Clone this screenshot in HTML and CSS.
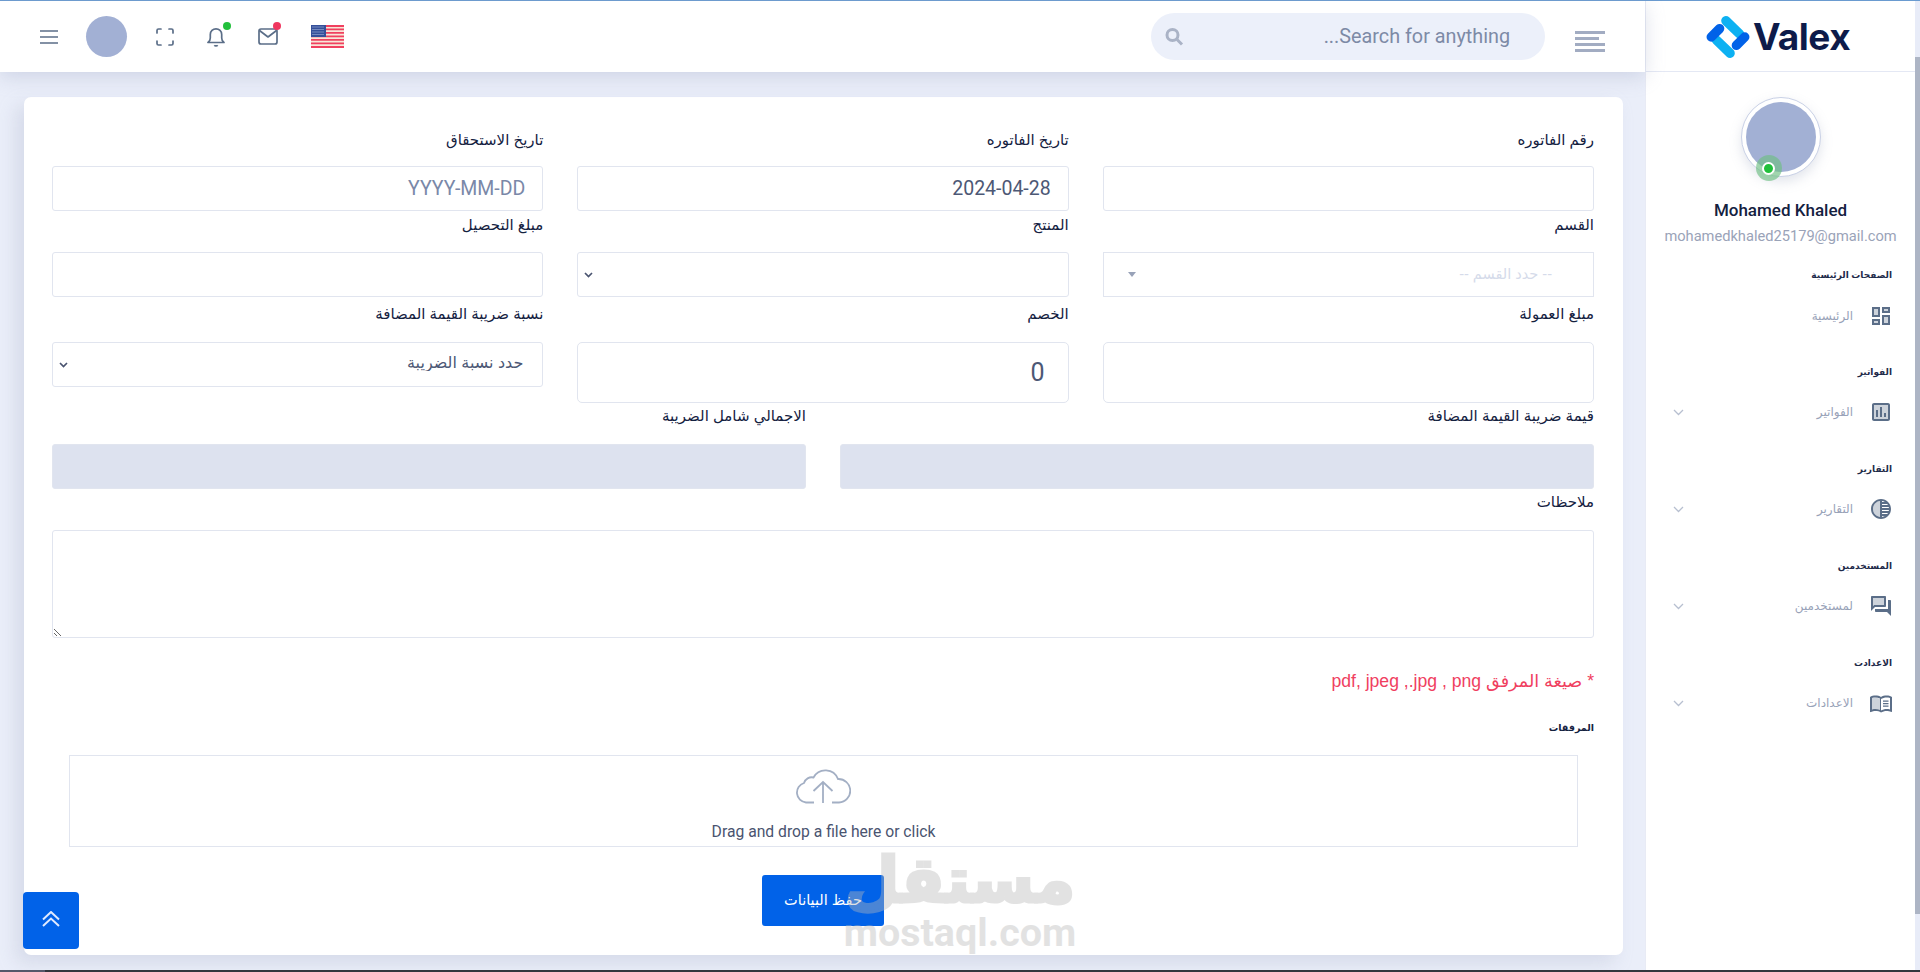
FILE: index.html
```html
<!DOCTYPE html>
<html lang="ar">
<head>
<meta charset="utf-8">
<title>Valex</title>
<link rel="stylesheet" href="styles.css">
</head>
<body>
<div class="topline"></div>
<div class="shell">
  <div class="main">
    <header class="header">
      <div class="header-left">
        <svg class="ic-menu" width="18" height="14" viewBox="0 0 18 14"><path d="M0 1h18M0 7h18M0 13h18"/></svg>
        <span class="head-avatar"></span>
        <svg class="ic-full" width="18" height="18" viewBox="0 0 18 18"><path d="M1 5V2.500A1.500 1.500 0 0 1 2.500 1H5M13 1h2.500A1.500 1.500 0 0 1 17 2.500V5M17 13v2.500a1.500 1.500 0 0 1-1.500 1.500H13M5 17H2.500A1.500 1.500 0 0 1 1 15.500V13"/></svg>
        <span class="ic-wrap ic-bell-wrap">
          <svg class="ic-line" width="18" height="20" viewBox="0 0 18 20"><path d="M1 15.500h16c-1.500-1-2.300-2-2.300-4.500V7.500a5.700 5.700 0 0 0-11.400 0V11c0 2.500-.8 3.500-2.300 4.500zM7.300 18.200c.8 1 2.600 1 3.400 0"/></svg>
          <i class="dot dot-green"></i>
        </span>
        <span class="ic-wrap ic-mail-wrap">
          <svg class="ic-line" width="20" height="17" viewBox="0 0 20 17"><rect x="1" y="1" width="18" height="15" rx="2"/><path d="M1.500 2.500 10 9l8.500-6.500"/></svg>
          <i class="dot dot-red"></i>
        </span>
        <svg class="flag" width="33" height="23" viewBox="0 0 33 23">
          <rect width="33" height="23" fill="#f8e6d8"/>
          <path d="M0 0h33v2H0zM0 3.500h33v1.800H0zM0 7h33v1.800H0zM0 10.500h33v1.800H0zM0 14h33v1.800H0zM0 17.500h33v1.800H0zM0 21h33v2H0z" fill="#f0405f"/>
          <rect width="15" height="12" fill="#35509a"/>
          <path d="M1.500 2h12M1.500 4.500h12M1.500 7h12M1.500 9.500h12" stroke="#b8c4e4" stroke-width="1" stroke-dasharray="1 1"/>
        </svg>
      </div>
      <div class="header-right">
        <div class="search">
          <svg class="ic-search" width="19" height="18" viewBox="0 0 19 18"><circle cx="7.500" cy="7" r="5.500"/><path d="m12 11.500 5 5"/></svg>
          <span class="search-text" dir="rtl">Search for anything...</span>
        </div>
        <div class="align-ic"><i></i><i class="short"></i><i></i><i></i></div>
      </div>
    </header>

    <div class="content">
      <form class="card" dir="rtl">
        <div class="row row-first">
          <div class="field"><label class="lbl">رقم الفاتوره</label><input class="ctl" type="text"></div>
          <div class="field"><label class="lbl">تاريخ الفاتوره</label><input class="ctl" type="text" value="2024-04-28"></div>
          <div class="field"><label class="lbl">تاريخ الاستحقاق</label><input class="ctl" type="text" placeholder="YYYY-MM-DD"></div>
        </div>
        <div class="row row-tight">
          <div class="field"><label class="lbl">القسم</label>
            <div class="fake-select"><span>-- حدد القسم --</span><i class="caret"></i></div>
          </div>
          <div class="field"><label class="lbl">المنتج</label><select class="ctl sel"><option></option></select></div>
          <div class="field"><label class="lbl">مبلغ التحصيل</label><input class="ctl" type="text"></div>
        </div>
        <div class="row row-mid">
          <div class="field"><label class="lbl">مبلغ العمولة</label><input class="ctl tall" type="text"></div>
          <div class="field"><label class="lbl">الخصم</label><input class="ctl tall big" type="text" value="0"></div>
          <div class="field"><label class="lbl">نسبة ضريبة القيمة المضافة</label><select class="ctl sel sel-tax"><option>حدد نسبة الضريبة</option></select></div>
        </div>
        <div class="row row-two">
          <div class="field"><label class="lbl">قيمة ضريبة القيمة المضافة</label><input class="ctl off" type="text" readonly></div>
          <div class="field"><label class="lbl">الاجمالي شامل الضريبة</label><input class="ctl off" type="text" readonly></div>
        </div>
        <div class="notes">
          <label class="lbl">ملاحظات</label>
          <textarea class="ctl area"></textarea>
        </div>
        <p class="hint">* صيغة المرفق  pdf, jpeg ,.jpg , png</p>
        <p class="attach">المرفقات</p>
        <div class="drop" dir="ltr">
          <svg class="cloud" width="56" height="36" viewBox="0 0 56 36"><path d="M19 34.500H11a10 10 0 0 1-2-19.500 8 8 0 0 1 9.500-5.500A13.500 13.500 0 0 1 43 11a11.700 11.700 0 0 1 1 23.500h-7M28 35V14M18.500 23 28 14l9.500 9"/></svg>
          <span class="drop-text">Drag and drop a file here or click</span>
        </div>
        <div class="actions"><button class="save" type="button">حفظ البيانات</button></div>
      </form>
    </div>
  </div>

  <aside class="side">
    <div class="brand">
      <svg class="brand-mark" width="44" height="44" viewBox="1 1 42 42"><g fill="none" stroke-width="9" stroke-linecap="round"><path d="M20 6.500 33 19M24 37.500 11 25" stroke="#0db1f2"/><path d="M6 22l8-8M38 22l-8 8" stroke="#0162e8"/></g></svg>
      <span class="brand-name">Valex</span>
    </div>
    <div class="profile">
      <div class="pic"><span class="pic-in"></span><i class="halo"><b></b></i></div>
      <div class="pname">Mohamed Khaled</div>
      <div class="pmail">mohamedkhaled25179@gmail.com</div>
    </div>
    <nav class="nav" dir="rtl">
      <section class="sec">
        <h4 class="sec-t">الصفحات الرئيسية</h4>
        <a class="item item-first">
          <svg class="nav-ic" viewBox="0 0 24 24"><path opacity=".3" d="M5 5h4v6H5zm10 8h4v6h-4zM5 17h4v2H5zM15 5h4v2h-4z"/><path d="M3 13h8V3H3v10zm2-8h4v6H5V5zm8 16h8V11h-8v10zm2-8h4v6h-4v-6zM13 3v6h8V3h-8zm6 4h-4V5h4v2zM3 21h8v-6H3v6zm2-4h4v2H5v-2z"/></svg>
          <span>الرئيسية</span>
        </a>
      </section>
      <section class="sec">
        <h4 class="sec-t">الفواتير</h4>
        <a class="item">
          <svg class="nav-ic" viewBox="0 0 24 24"><path opacity=".3" d="M5 5v14h14V5H5zm4 12H7v-7h2v7zm4 0h-2V7h2v10zm4 0h-2v-4h2v4z"/><path d="M3 5v14c0 1.100.9 2 2 2h14c1.100 0 2-.9 2-2V5c0-1.100-.9-2-2-2H5c-1.100 0-2 .9-2 2zm2 0h14v14H5V5zm2 5h2v7H7zm4-3h2v10h-2zm4 6h2v4h-2z"/></svg>
          <span>الفواتير</span>
          <svg class="chev" width="11" height="7" viewBox="0 0 11 7"><path d="m1 1 4.500 4.500L10 1"/></svg>
        </a>
      </section>
      <section class="sec">
        <h4 class="sec-t">التقارير</h4>
        <a class="item">
          <svg class="nav-ic" viewBox="0 0 24 24"><path opacity=".3" d="M4 12c0 4.080 3.060 7.440 7 7.930V4.070C7.050 4.560 4 7.920 4 12z"/><path d="M12 2C6.480 2 2 6.480 2 12s4.480 10 10 10 10-4.480 10-10S17.520 2 12 2zm-1 17.930c-3.940-.49-7-3.850-7-7.930s3.050-7.440 7-7.930v15.860zm2-15.860c1.030.13 2 .45 2.870.93H13v-.93zM13 7h5.240c.25.31.48.65.68 1H13V7zm0 3h6.740c.08.33.15.66.19 1H13v-1zm0 9.930V19h2.870c-.87.48-1.840.8-2.870.93zM18.240 17H13v-1h5.920c-.2.35-.43.69-.68 1zm1.500-3H13v-1h6.930c-.04.34-.11.67-.19 1z"/></svg>
          <span>التقارير</span>
          <svg class="chev" width="11" height="7" viewBox="0 0 11 7"><path d="m1 1 4.500 4.500L10 1"/></svg>
        </a>
      </section>
      <section class="sec">
        <h4 class="sec-t">المستخدمين</h4>
        <a class="item">
          <svg class="nav-ic" viewBox="0 0 24 24"><path opacity=".3" d="M15 11V4H4v8.170l.59-.58.58-.59H6z"/><path d="M21 6h-2v9H6v2c0 .55.45 1 1 1h11l4 4V7c0-.55-.45-1-1-1zm-5 7c.55 0 1-.45 1-1V3c0-.55-.45-1-1-1H3c-.55 0-1 .45-1 1v14l4-4h10zM4.590 11.590l-.59.58V4h11v7H5.170l-.58.59z"/></svg>
          <span>لمستخدمين</span>
          <svg class="chev" width="11" height="7" viewBox="0 0 11 7"><path d="m1 1 4.500 4.500L10 1"/></svg>
        </a>
      </section>
      <section class="sec">
        <h4 class="sec-t">الاعدادت</h4>
        <a class="item">
          <svg class="nav-ic" viewBox="0 0 24 24"><path opacity=".3" d="M11 8c-1.350-.85-3.800-1.500-5.500-1.500-1.200 0-2.400.15-2.500.5v11.500c1.100-.35 2.300-.5 3.500-.5 1.700 0 3.150.65 4.500 1.500V8z"/><path d="M21 5c-1.110-.35-2.330-.5-3.500-.5-1.950 0-4.050.4-5.500 1.500-1.450-1.100-3.550-1.500-5.500-1.500S2.450 4.900 1 6v14.650c0 .25.25.5.5.5.1 0 .15-.05.25-.05C3.100 20.450 5.050 20 6.500 20c1.950 0 4.050.4 5.500 1.500 1.350-.85 3.800-1.500 5.500-1.500 1.650 0 3.350.3 4.750 1.050.1.05.15.05.25.05.25 0 .5-.25.5-.5V6c-.6-.45-1.250-.75-2-1zM3 18.500V7c1.100-.35 2.300-.5 3.500-.5 1.340 0 3.140.41 4.500 1v11.500c-1.360-.59-3.160-1-4.500-1-1.200 0-2.400.15-3.500.5zm18 0c-1.100-.35-2.300-.5-3.500-.5-1.700 0-4.150.65-5.500 1.500V8c1.350-.85 3.800-1.500 5.500-1.500 1.200 0 2.400.15 3.500.5v11.500z"/><path d="M14 9.500h5.500v1.300H14zM14 12h5.500v1.300H14zM14 14.500h5.500v1.300H14z"/></svg>
          <span>الاعدادات</span>
          <svg class="chev" width="11" height="7" viewBox="0 0 11 7"><path d="m1 1 4.500 4.500L10 1"/></svg>
        </a>
      </section>
    </nav>
  </aside>
  <div class="scroll"><i></i></div>
</div>
<div class="taskbar"><i></i></div>

<a class="totop"><svg width="18" height="16" viewBox="0 0 18 16"><path d="M1 8.500 9 1l8 7.500M1 15l8-7.500 8 7.500"/></svg></a>
<div class="mark" aria-hidden="true"><span class="mark-ar">مستقل</span><span class="mark-en">mostaql.com</span></div>
</body>
</html>
```
FILE: styles.css
```css
* { box-sizing: border-box; }
html, body { margin: 0; height: 972px; overflow: hidden; }
body {
  position: relative;
  display: flex;
  flex-direction: column;
  background: #eaeef9;
  color: #14213f;
  font-family: "Roboto", "DejaVu Sans", sans-serif;
}
.topline { height: 1px; background: #6a9bd0; flex: none; }
.shell { flex: 1; display: flex; min-height: 0; }
.main { width: 1645px; flex: none; display: flex; flex-direction: column; }

.header {
  height: 71px; flex: none; background: #fff;
  display: flex; justify-content: space-between; align-items: center;
  padding: 0 40px 0 40px;
  box-shadow: 0 5px 18px rgba(150,160,190,.32);
  position: relative; z-index: 1;
}
.header-left { display: flex; align-items: center; }
.header-right { display: flex; align-items: center; }
.ic-menu path, .ic-line, .ic-full path { fill: none; stroke: #5b6e88; stroke-width: 1.7; }
.ic-menu { margin-right: 28px; }
.head-avatar { width: 41px; height: 41px; border-radius: 50%; background: #a2b0d4; margin-right: 29px; }
.ic-full { margin-right: 33px; stroke-linecap: round; }
.ic-wrap { position: relative; display: flex; }
.ic-bell-wrap { margin-right: 33px; }
.ic-mail-wrap { margin-right: 33px; }
.ic-line { stroke-linejoin: round; }
.dot { position: absolute; width: 8px; height: 8px; border-radius: 50%; top: -5px; right: -6px; }
.dot-green { background: #22c03c; }
.dot-red { background: #f0375f; right: -3px; top: -6px; }
.flag { display: block; }

.search {
  width: 394px; height: 47px; border-radius: 24px; background: #ecf0fa;
  display: flex; align-items: center; justify-content: space-between;
  padding: 0 35px 0 14px; margin-right: 30px;
}
.ic-search circle, .ic-search path { fill: none; stroke: #aab3c6; stroke-width: 3; }
.search-text { font-size: 19.800px; color: #7d8aa6; }
.align-ic { width: 30px; display: flex; flex-direction: column; gap: 3px; margin-top: 9px; }
.align-ic i { height: 3px; background: #a2acc2; display: block; }
.align-ic .short { width: 80%; }

.content { flex: 1; min-height: 0; padding: 25px 22px 14px 24px; }
.card {
  height: 858px; background: #fff; border-radius: 7px; padding: 33px 29px 0 28px;
  box-shadow: -8px 8px 18px rgba(160,170,195,.28);
}
.row { display: grid; grid-template-columns: repeat(3, 1fr); column-gap: 34px; align-items: start; }
.row-tight { margin-top: 4px; }
.row-mid { margin-top: 7px; }
.row-two { grid-template-columns: repeat(2, 1fr); margin-top: 3px; }
.field { min-width: 0; }
.lbl {
  display: block; height: 20px; line-height: 20px; margin-bottom: 18px;
  font-size: 15px; color: #14213f;
  font-family: "Liberation Sans", "DejaVu Sans", sans-serif;
}
.row-first .lbl { margin-bottom: 16px; }
.row-tight .lbl { margin-bottom: 17px; }
.ctl {
  display: block; width: 100%; height: 45px; background: #fff;
  border: 1px solid #e1e5ef; border-radius: 3px; padding: 0 17px;
  font-family: "Roboto", sans-serif; font-size: 19.500px; color: #4d5875; outline: 0;
  text-align: right;
}
.ctl::placeholder { color: #7a88a8; opacity: 1; }
.tall { height: 61px; border-radius: 5px; }
.big { font-size: 25px; padding-right: 23px; }
.off { height: 45px; background: #dde2ef; }
.sel {
  appearance: none; padding: 0 19px 0 24px;
  background-image: url("data:image/svg+xml,%3Csvg xmlns='http://www.w3.org/2000/svg' width='9' height='6'%3E%3Cpath d='M1 1l3.500 3.500L8 1' fill='none' stroke='%234a5470' stroke-width='1.700'/%3E%3C/svg%3E");
  background-repeat: no-repeat; background-position: 6px 50%;
}
.sel-tax { padding-bottom: 4px; font-size: 16px; font-family: "Liberation Sans", "DejaVu Sans", sans-serif; }
.fake-select {
  height: 45px; border: 1px solid #e1e5ef; display: flex; align-items: center;
  justify-content: space-between; padding: 0 41px 0 24px;
}
.fake-select span { color: #d5dbea; font-size: 14.500px; font-family: "Liberation Sans", "DejaVu Sans", sans-serif; margin-top: -2px; }
.caret { width: 0; height: 0; border: 4px solid transparent; border-top: 5px solid #98a2b8; border-bottom: 0; }
.notes { margin-top: 3px; }
.area { height: 108px; resize: both; }
.hint {
  margin: 33px 0 0; height: 20px; line-height: 20px; font-size: 17.600px; color: #f0405f;
  font-family: "Liberation Sans", "DejaVu Sans", sans-serif;
}
.attach { margin: 27px 0 0; height: 20px; line-height: 20px; font-size: 9.500px; font-weight: 700; color: #14213f; font-family: "Liberation Sans", "DejaVu Sans", sans-serif; }
.drop {
  margin: 17px 16px 0 17px; height: 92px; border: 1px solid #e1e5ef;
  display: flex; flex-direction: column; align-items: center; padding-top: 12px;
}
.cloud { display: block; margin-right: 2px; }
.cloud path { fill: none; stroke: #a3afc4; stroke-width: 1.800; }
.drop-text { font-size: 15.700px; color: #4a5470; margin-top: 18px; line-height: 20px; }
.actions { display: flex; justify-content: center; margin-top: 28px; }
.save {
  width: 122px; height: 51px; background: #0162e8; color: #fff; border: 0; border-radius: 3px; padding: 0 0 2px;
  font-family: "Liberation Sans", "DejaVu Sans", sans-serif; font-size: 14.500px;
}

.side { width: 270px; flex: none; background: #fff; border-left: 1px solid #e8ebf5; display: flex; flex-direction: column; }
.brand {
  height: 71px; flex: none; border-bottom: 1px solid #e4e8f4;
  display: flex; align-items: center; justify-content: center; gap: 3px; padding-right: 5px;
}
.brand-mark { display: block; margin-top: 1px; }
.brand-name { font-family: "Inter", sans-serif; font-weight: 700; font-size: 37px; color: #0d1b4a; letter-spacing: -.5px; }
.profile { display: flex; flex-direction: column; align-items: center; padding-top: 25px; }
.pic {
  position: relative; width: 80px; height: 80px; border-radius: 50%; padding: 4px;
  border: 1px solid #c9d1e6; background: #fff; box-shadow: 0 5px 12px rgba(140,150,180,.25);
}
.pic-in { display: block; width: 100%; height: 100%; border-radius: 50%; background: #a2b0d4; }
.halo {
  position: absolute; left: 14px; top: 57px; width: 26px; height: 26px; border-radius: 50%;
  background: rgba(110,190,130,.65); display: flex; align-items: center; justify-content: center;
}
.halo b { width: 13px; height: 13px; border-radius: 50%; background: #22c03c; border: 2px solid #fff; }
.pname { margin-top: 23px; line-height: 20px; font-size: 17px; font-weight: 500; color: #14213f; }
.pmail { margin-top: 6px; line-height: 20px; font-size: 14.650px; color: #9aa3b8; }
.nav { margin-top: 21px; padding: 0 23px 0 27px; }
.sec { height: 97px; }
.sec-t {
  margin: 0; height: 16px; line-height: 16px; font-size: 9px; font-weight: 700; color: #1e2a4a;
  font-family: "Liberation Sans", "DejaVu Sans", sans-serif;
}
.item { display: flex; align-items: center; height: 40px; margin-top: 12px; color: #98a2b8; font-size: 12px; font-family: "Liberation Sans", "DejaVu Sans", sans-serif; }
.item-first { margin-top: 13px; }
.nav-ic { width: 24px; height: 24px; fill: #5b6e88; margin: 0 -1px 0 16px; flex: none; }
.chev { margin-right: auto; }
.chev path { fill: none; stroke: #b7bfd0; stroke-width: 1.300; }

.scroll { width: 5px; flex: none; background: #e8ecf8; padding-top: 56px; }
.scroll i { display: block; height: 857px; background: #adb5c5; }
.taskbar { height: 2px; flex: none; background: #33363d; }
.taskbar i { display: block; width: 45px; height: 2px; background: #55586a; }

.totop {
  position: absolute; left: 23px; top: 892px; width: 56px; height: 57px; border-radius: 4px; background: #0162e8;
  display: flex; align-items: center; justify-content: center; padding-bottom: 3px;
}
.totop path { fill: none; stroke: #dfeaff; stroke-width: 2; }
.mark {
  position: absolute; left: 845px; top: 841px; width: 230px; height: 115px; pointer-events: none;
  display: flex; flex-direction: column; align-items: center; color: #b9b9b9; opacity: .4;
}
.mark-ar { font-family: "DejaVu Sans", sans-serif; font-weight: 700; font-size: 63px; line-height: 80px; direction: rtl; -webkit-text-stroke: 3px #b9b9b9; }
.mark-en { font-family: "Roboto", sans-serif; font-weight: 700; font-size: 39.500px; line-height: 32px; margin-top: -4px; }
```
